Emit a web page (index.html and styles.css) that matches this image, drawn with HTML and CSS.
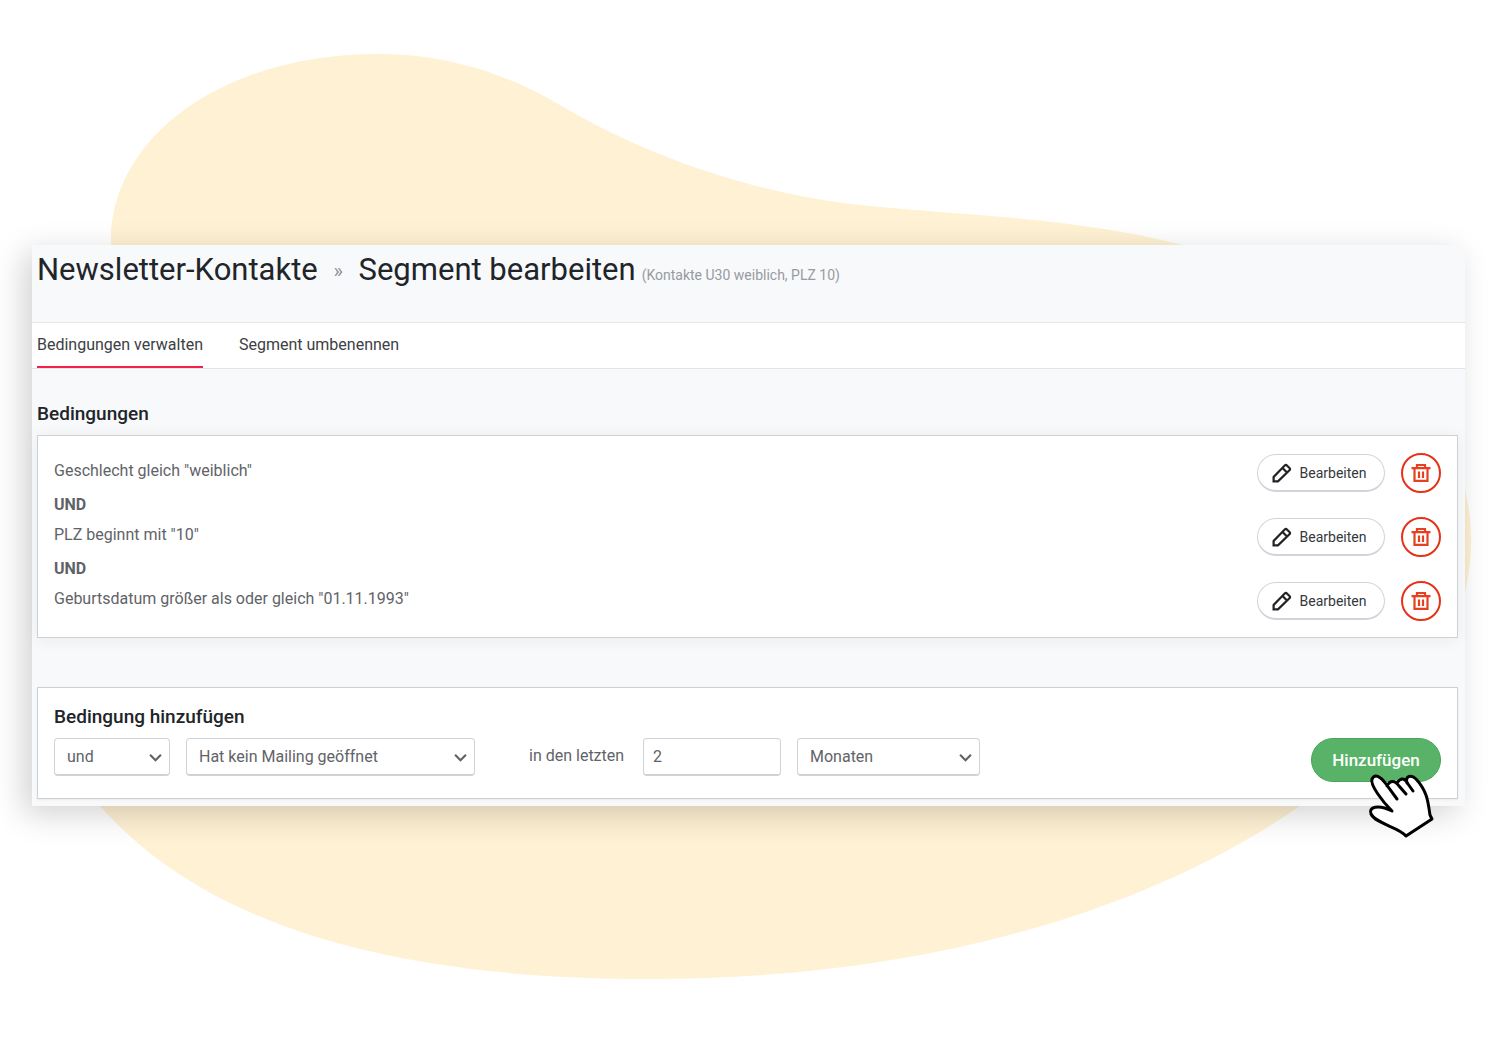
FILE: index.html
```
<!DOCTYPE html>
<html lang="de">
<head>
    <meta charset="UTF-8" />
    <meta name="viewport" content="width=device-width, initial-scale=1.0" />
    <title>Newsletter-Kontakte » Segment bearbeiten</title>
    <link rel="stylesheet" href="styles.css">
</head>
<body>
    <!-- Hintergrundform -->
    <svg class="blob" viewBox="0 0 1500 1050" preserveAspectRatio="none" aria-hidden="true">
        <path d="M111 245C108 140 220 54 378 54C450 54 511 76 560 105C650 158 750 191 850 204C960 216 1070 216 1183 245C1340 290 1471 400 1471 540C1471 645 1400 735 1300 806C1120 930 880 979 650 979C390 979 205 925 100 806C20 700 118 420 111 245Z" />
    </svg>

    <!-- Icons -->
    <svg class="sprite" aria-hidden="true">
        <symbol id="icon-pencil" viewBox="0 0 20 20">
            <path d="M1.6 18.4V14L13 2.3a1.2 1.2 0 0 1 1.7 0l3 3a1.2 1.2 0 0 1 0 1.7L6 18.4zM10.5 5l4.5 4.5" />
        </symbol>
        <symbol id="icon-trash" viewBox="0 0 20 20">
            <path d="M.5 5.2h19M6 5V2h8v3M3.5 5v12.8h13V5M8 8.5v6.5M12 8.5v6.5" />
        </symbol>
        <symbol id="icon-chevron" viewBox="0 0 12 8">
            <path d="M1 1.5l5 5 5-5" />
        </symbol>
    </svg>

    <main class="panel">
        <header class="page-header">
            <h1>Newsletter-Kontakte <span class="sep">»</span> Segment bearbeiten</h1>
            <small>(Kontakte U30 weiblich, PLZ 10)</small>
        </header>

        <nav class="tabs">
            <a href="#" class="active">Bedingungen verwalten</a>
            <a href="#">Segment umbenennen</a>
        </nav>

        <div class="content">
            <h2>Bedingungen</h2>
            <section class="card conditions">
                <div class="condition">
                    <p>Geschlecht gleich "weiblich"</p>
                    <button type="button" class="btn-edit"><svg><use href="#icon-pencil" /></svg>Bearbeiten</button>
                    <button type="button" class="btn-delete" aria-label="Löschen"><svg><use href="#icon-trash" /></svg></button>
                </div>
                <div class="operator">UND</div>
                <div class="condition">
                    <p>PLZ beginnt mit "10"</p>
                    <button type="button" class="btn-edit"><svg><use href="#icon-pencil" /></svg>Bearbeiten</button>
                    <button type="button" class="btn-delete" aria-label="Löschen"><svg><use href="#icon-trash" /></svg></button>
                </div>
                <div class="operator">UND</div>
                <div class="condition">
                    <p>Geburtsdatum größer als oder gleich "01.11.1993"</p>
                    <button type="button" class="btn-edit"><svg><use href="#icon-pencil" /></svg>Bearbeiten</button>
                    <button type="button" class="btn-delete" aria-label="Löschen"><svg><use href="#icon-trash" /></svg></button>
                </div>
            </section>

            <section class="card">
                <h2>Bedingung hinzufügen</h2>
                <form class="add-form">
                    <div class="select operator-select">
                        <select aria-label="Verknüpfung"><option>und</option></select>
                        <svg><use href="#icon-chevron" /></svg>
                    </div>
                    <div class="select rule-select">
                        <select aria-label="Bedingung"><option>Hat kein Mailing geöffnet</option></select>
                        <svg><use href="#icon-chevron" /></svg>
                    </div>
                    <label for="amount">in den letzten</label>
                    <input type="text" id="amount" value="2">
                    <div class="select unit-select">
                        <select aria-label="Zeiteinheit"><option>Monaten</option></select>
                        <svg><use href="#icon-chevron" /></svg>
                    </div>
                    <div class="submit">
                        <button type="button" class="btn-add">Hinzufügen</button>
                        <!-- Mauszeiger -->
                        <svg class="hand" viewBox="0 0 66 64" aria-hidden="true">
                            <path class="hand-fill" d="M38 62C30 53 8 49 3 40C1 34 7 31 24 37C14 26 3 11 4 5C7-1 13 3 19 11C23 6 27 5 31 8C34 4 37 4 40 8C39 1 44 0 48 5C60 18 61 31 64 45Z" />
                            <path d="M38 62C31 53 8 50 3 40C0 33 10 30 24 37C14 27 2 11 4 5C7-1 13 3 18 10L29 25M19 12C22 6 27 6 31 12L38 20M29 9C33 3 37 4 40 10L45 17M39 9C37 2 43 0 48 5C60 18 60 29 62 41L64 45L38 62" />
                        </svg>
                    </div>
                </form>
            </section>
        </div>
    </main>
</body>
</html>
```
FILE: styles.css
```
* {
    box-sizing: border-box;
}
body {
    margin: 0;
    min-height: 100vh;
    padding: 245px 35px 32px 32px;
    position: relative;
    background: #fff;
    color: #5f6368;
    font-family: Roboto, sans-serif;
    font-size: 16px;
    line-height: 24px;
}
h1, h2, p {
    margin: 0;
    font-weight: 400;
}
svg {
    fill: none;
    stroke: currentColor;
}
.sprite {
    position: absolute;
    width: 0;
    height: 0;
}
.blob {
    position: absolute;
    top: 0;
    left: 0;
    width: 100%;
    height: 100%;
    fill: #fff1d3;
    stroke: none;
}

/* Panel */
.panel {
    position: relative;
    background: #f7f9fb;
    box-shadow: -8px 8px 30px rgba(0, 0, 0, 0.18);
}
.page-header {
    display: flex;
    align-items: baseline;
    gap: 6px;
    height: 78px;
    padding: 5px;
    border-bottom: 1px solid #e2e6ea;
}
h1 {
    color: #212529;
    font-size: 31px;
    line-height: 40px;
}
.sep {
    margin: 0 8px;
    color: #8d9296;
    font-size: 20px;
    vertical-align: 2px;
}
small {
    color: #979b9f;
    font-size: 14px;
}

/* Tabs */
.tabs {
    display: flex;
    gap: 36px;
    padding: 0 5px;
    background: #fff;
    border-bottom: 1px solid #e2e6ea;
}
.tabs a {
    height: 45px;
    color: #3c4043;
    line-height: 43px;
    text-decoration: none;
}
.tabs .active {
    border-bottom: 2px solid #f5204a;
}

/* Inhalt */
.content {
    padding: 33px 7px 7px 5px;
}
h2 {
    margin-bottom: 10px;
    color: #212529;
    font-size: 19px;
    font-weight: 500;
    line-height: 23px;
}
.card {
    padding: 17px 16px 16px;
    background: #fff;
    border: 1px solid #cdd1d5;
    box-shadow: 0 1px 2px rgba(0, 0, 0, 0.06);
}
.conditions {
    margin-bottom: 49px;
    box-shadow: 0 2px 16px rgba(0, 0, 0, 0.06);
}
.condition {
    display: flex;
    align-items: center;
    gap: 16px;
    height: 40px;
}
.condition p {
    flex: 1;
    height: 40px;
    line-height: 36px;
}
.operator {
    font-weight: 700;
}

/* Buttons */
button {
    font-family: inherit;
    cursor: pointer;
}
.btn-edit {
    display: flex;
    align-items: center;
    justify-content: center;
    gap: 8px;
    width: 128px;
    height: 38px;
    padding: 0 4px 0 0;
    background: #fff;
    border: 1px solid #d0d3da;
    border-bottom-width: 2px;
    border-radius: 19px;
    color: #34383c;
    font-size: 14px;
}
.btn-edit svg {
    width: 20px;
    height: 20px;
    color: #222;
    stroke-width: 2.2;
}
.btn-delete {
    display: flex;
    align-items: center;
    justify-content: center;
    width: 40px;
    height: 40px;
    padding: 0;
    background: #fff;
    border: 2px solid #e5331a;
    border-radius: 50%;
    color: #e5401f;
}
.btn-delete svg {
    width: 20px;
    height: 20px;
    stroke-width: 2.2;
}

/* Formular */
.add-form {
    display: flex;
    align-items: flex-start;
    gap: 16px;
}
.select {
    position: relative;
}
.select svg {
    position: absolute;
    top: 15px;
    right: 8px;
    width: 13px;
    height: 9px;
    stroke-width: 2;
    pointer-events: none;
}
select, input {
    width: 100%;
    height: 38px;
    padding: 0 12px;
    background: #fff;
    border: 1px solid #cfd3d8;
    border-bottom-width: 2px;
    border-radius: 4px;
    color: inherit;
    font-family: inherit;
    font-size: 16px;
    appearance: none;
}
input {
    width: 138px;
    padding: 0 9px;
}
.operator-select {
    width: 116px;
}
.rule-select {
    width: 289px;
}
.unit-select {
    width: 183px;
}
label {
    width: 98px;
    margin-left: 38px;
    line-height: 36px;
    white-space: nowrap;
}
.submit {
    position: relative;
    margin-left: auto;
}
.btn-add {
    width: 130px;
    height: 44px;
    padding: 0;
    background: #58b368;
    border: 1px solid #4aa75b;
    border-radius: 22px;
    color: #fff;
    font-size: 17px;
    font-weight: 500;
}
.hand {
    position: absolute;
    top: 36px;
    right: 7px;
    width: 66px;
    height: 64px;
    overflow: visible;
    color: #000;
    stroke-width: 3;
    stroke-linecap: round;
    stroke-linejoin: round;
    pointer-events: none;
}
.hand-fill {
    fill: #fff;
    stroke: none;
}
```
